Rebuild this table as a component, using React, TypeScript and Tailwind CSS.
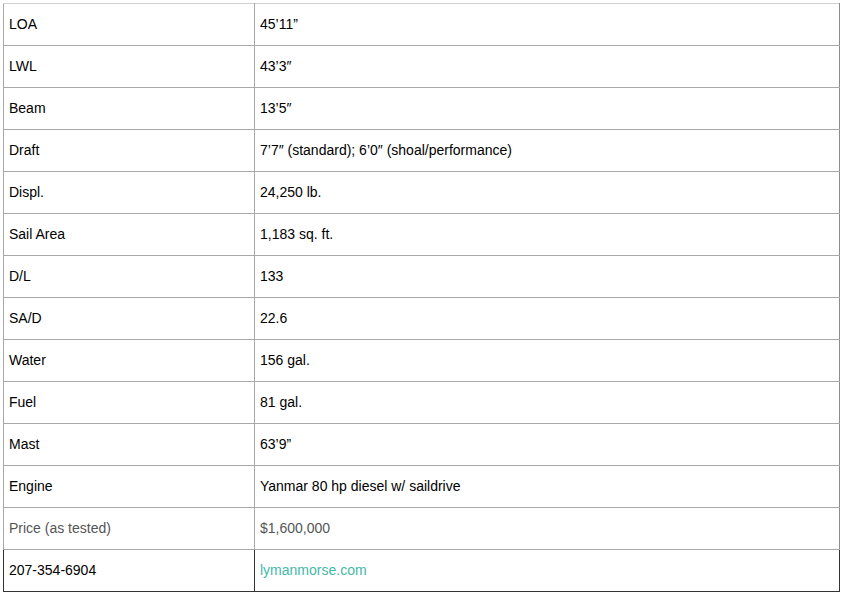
const specs: [string, string][] = [
	["LOA", "45’11”"],
	["LWL", "43’3″"],
	["Beam", "13’5″"],
	["Draft", "7’7″ (standard); 6’0″ (shoal/performance)"],
	["Displ.", "24,250 lb."],
	["Sail Area", "1,183 sq. ft."],
	["D/L", "133"],
	["SA/D", "22.6"],
	["Water", "156 gal."],
	["Fuel", "81 gal."],
	["Mast", "63’9”"],
	["Engine", "Yanmar 80 hp diesel w/ saildrive"],
]

export default function App() {
	return (
		<div className="min-h-screen bg-white pt-[3px] pl-[3px] font-['Liberation_Sans',Arial,sans-serif] text-[14px] text-black">
			<table className="w-[837px] border-collapse table-fixed">
				<colgroup>
					<col className="w-[251px]" />
					<col />
				</colgroup>
				<tbody>
					{specs.map(([label, value], i) => (
						<tr key={label} className="h-[42px]">
							<td
								className={
									"border border-[#a8a8a8] px-[5px] align-middle " +
									(i === 0 ? "border-t-[#d0d0d0]" : "")
								}
							>
								{label}
							</td>
							<td
								className={
									"border border-[#a8a8a8] px-[5px] align-middle border-r-[#8c8c8c] " +
									(i === 0 ? "border-t-[#d0d0d0]" : "")
								}
							>
								{value}
							</td>
						</tr>
					))}
					<tr className="h-[42px] text-[#555]">
						<td className="border border-[#a8a8a8] px-[5px] align-middle">Price (as tested)</td>
						<td className="border border-[#a8a8a8] border-r-[#8c8c8c] px-[5px] align-middle">
							$1,600,000
						</td>
					</tr>
					<tr className="h-[42px]">
						<td className="border border-[#333] border-t-[#888] px-[5px] align-middle">207-354-6904</td>
						<td className="border border-[#333] border-t-[#888] px-[5px] align-middle">
							<a href="#" className="text-[#45b8a8]">
								lymanmorse.com
							</a>
						</td>
					</tr>
				</tbody>
			</table>
		</div>
	)
}
